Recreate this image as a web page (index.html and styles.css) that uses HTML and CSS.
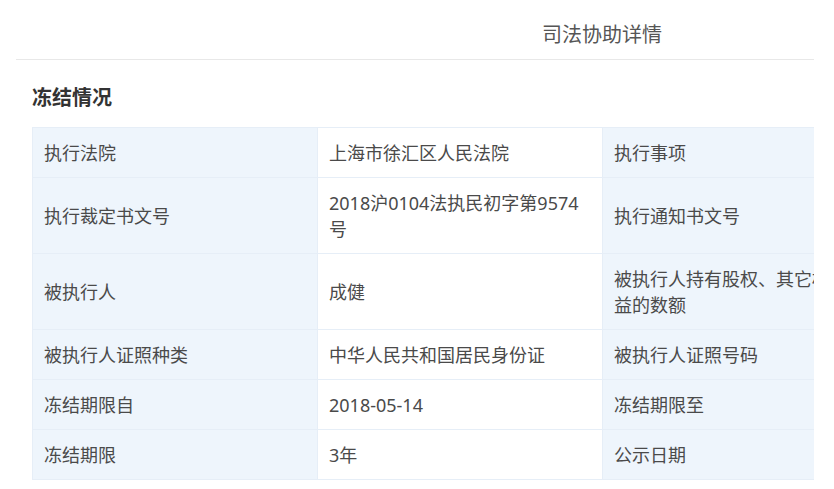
FILE: index.html
```html
<!DOCTYPE html>
<html lang="zh-CN">
<head>
<meta charset="utf-8">
<title>司法协助详情</title>
<link rel="stylesheet" href="styles.css">
</head>
<body>
<div class="viewport">
  <div class="modal">
    <div class="modal-header">司法协助详情</div>
    <div class="modal-body">
      <h3 class="section-title">冻结情况</h3>
      <table class="detail-table">
        <colgroup>
          <col class="c-label"><col class="c-value"><col class="c-label2"><col class="c-value2">
        </colgroup>
        <tbody>
          <tr>
            <td class="label">执行法院</td>
            <td class="value">上海市徐汇区人民法院</td>
            <td class="label">执行事项</td>
            <td class="value">协助冻结</td>
          </tr>
          <tr>
            <td class="label">执行裁定书文号</td>
            <td class="value">2018沪0104法执民初字第9574号</td>
            <td class="label">执行通知书文号</td>
            <td class="value">-</td>
          </tr>
          <tr>
            <td class="label">被执行人</td>
            <td class="value">成健</td>
            <td class="label">被执行人持有股权、其它权益的数额</td>
            <td class="value">-</td>
          </tr>
          <tr>
            <td class="label">被执行人证照种类</td>
            <td class="value">中华人民共和国居民身份证</td>
            <td class="label">被执行人证照号码</td>
            <td class="value">-</td>
          </tr>
          <tr>
            <td class="label">冻结期限自</td>
            <td class="value">2018-05-14</td>
            <td class="label">冻结期限至</td>
            <td class="value">2021-05-13</td>
          </tr>
          <tr>
            <td class="label">冻结期限</td>
            <td class="value">3年</td>
            <td class="label">公示日期</td>
            <td class="value">-</td>
          </tr>
        </tbody>
      </table>
    </div>
  </div>
</div>
</body>
</html>
```
FILE: styles.css
```css
html, body {
  margin: 0;
  padding: 0;
  background: #fff;
}
body {
  font-family: "Noto Sans", "Noto Sans CJK SC", "Liberation Sans", sans-serif;
  color: #333;
}
.viewport {
  width: 814px;
  height: 489px;
  overflow: hidden;
}
.modal {
  width: 1172px;
  padding: 0 16px;
}
.modal-header {
  height: 60px;
  line-height: 58px;
  padding-top: 6px;
  box-sizing: border-box;
  text-align: center;
  font-size: 20px;
  color: #555;
  border-bottom: 1px solid #e8e8e8;
}
.modal-body {
  padding: 0 16px;
}
.section-title {
  margin: 0;
  padding-top: 24px;
  height: 67px;
  box-sizing: border-box;
  font-size: 20px;
  font-weight: 700;
  line-height: 28px;
  color: #333;
}
.detail-table {
  width: 1140px;
  table-layout: fixed;
  border-collapse: collapse;
  font-size: 18px;
  line-height: 26px;
  color: #4a4a4a;
}
.detail-table .c-label,
.detail-table .c-value {
  width: 285px;
}
.detail-table .c-label2 {
  width: 250px;
}
.detail-table .c-value2 {
  width: 320px;
}
.detail-table td {
  border: 1px solid #e6eef7;
  padding: 12px 11px 11px;
  vertical-align: middle;
  word-break: break-all;
}
.detail-table .label {
  background: #eef5fc;
}
.detail-table .value {
  background: #fff;
}
```
